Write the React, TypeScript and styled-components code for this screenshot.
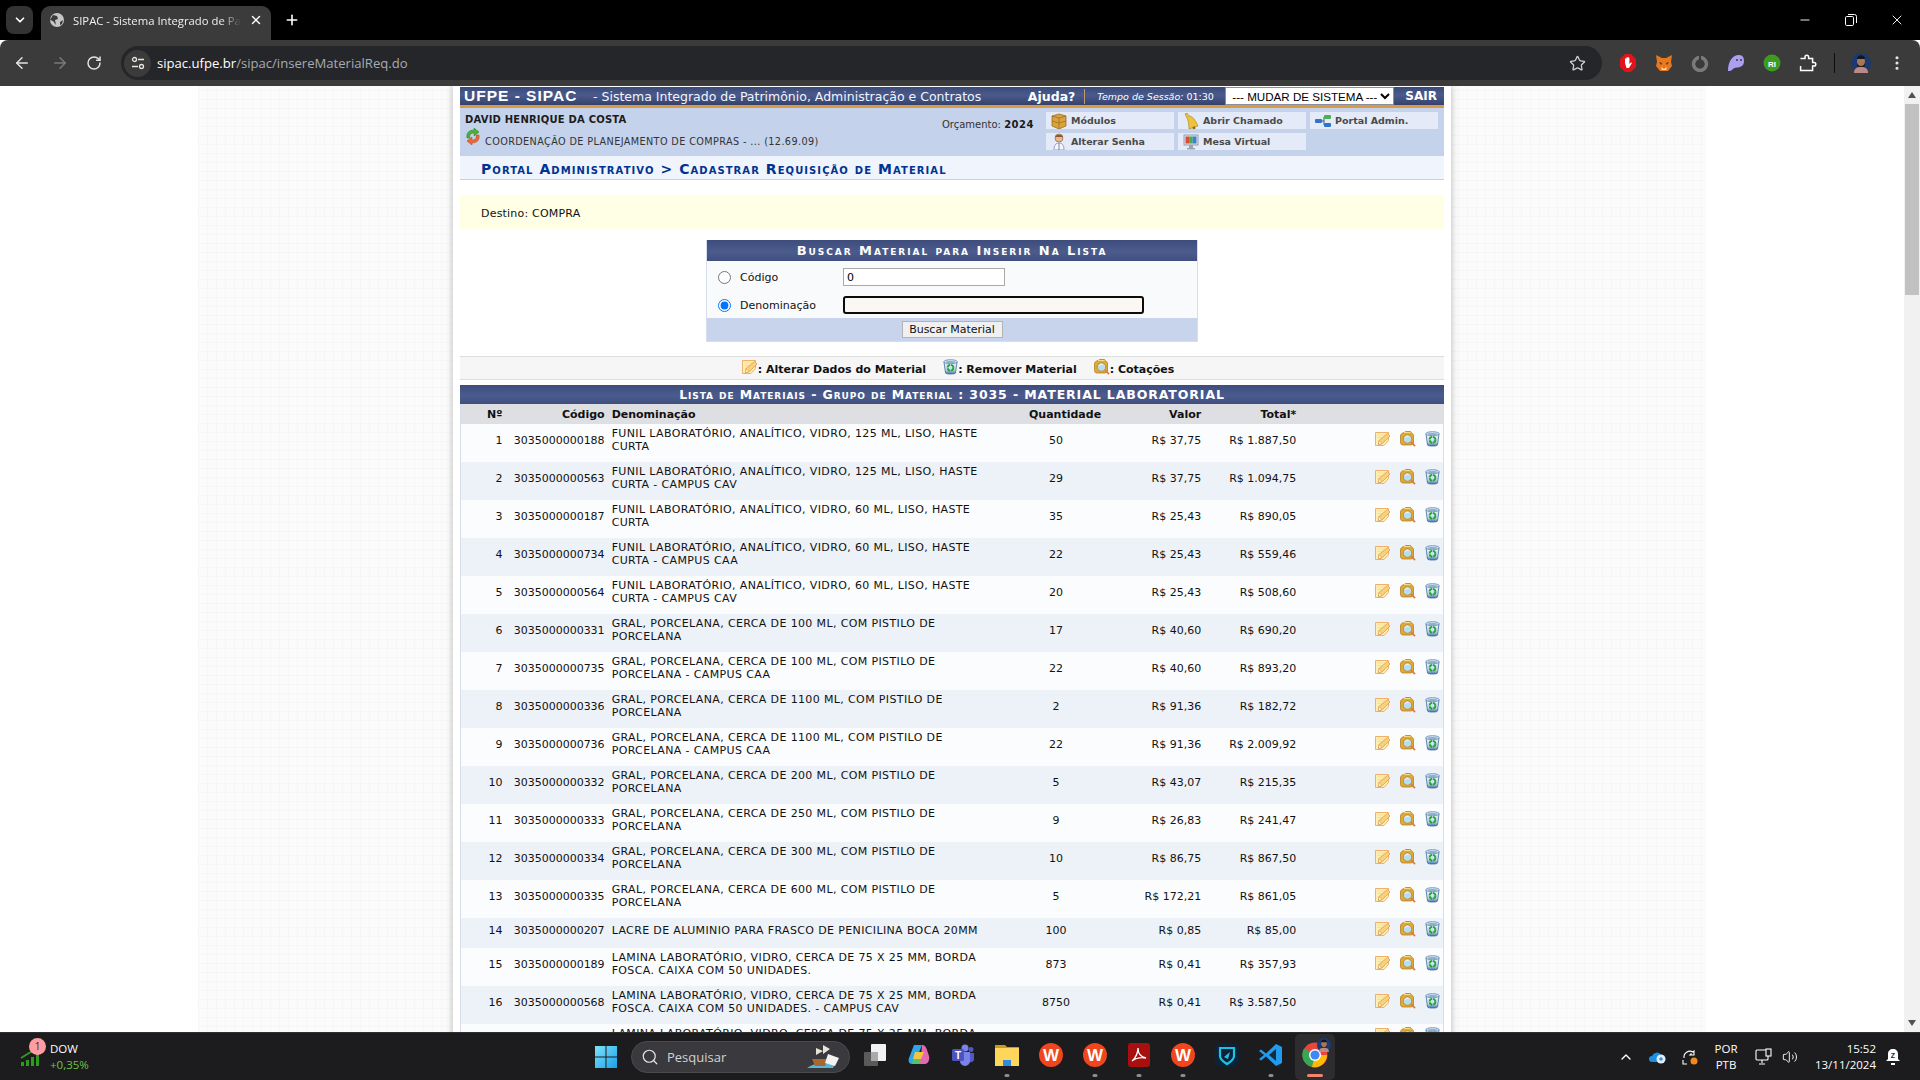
import React from 'react';
import styled, { createGlobalStyle } from 'styled-components';
import {
  ArrowLeft,
  ArrowRight,
  ChevronDown,
  ChevronUp,
  EllipsisVertical,
  Minus,
  Plus,
  RotateCw,
  Search,
  Star,
  Volume2,
  X,
} from 'lucide-react';

const VERDANA = '"DejaVu Sans", Verdana, sans-serif';
const SEGOE = '"Open Sans", "Noto Sans", sans-serif';

const GlobalStyle = createGlobalStyle`
  html, body { margin: 0; padding: 0; height: 100%; overflow: hidden; background: #fff; }
  * { box-sizing: border-box; }
`;

const Screen = styled.div`
  width: 1920px;
  height: 1080px;
  display: flex;
  flex-direction: column;
  overflow: hidden;
`;

/* browser chrome */
const TabStrip = styled.div`
  height: 40px;
  flex: none;
  background: #000;
  display: flex;
  align-items: flex-start;
  padding: 6px 0 0 6px;
  font-family: ${SEGOE};
  color: #fff;
`;

const TabSearch = styled.div`
  width: 27px;
  height: 28px;
  border-radius: 8px;
  background: #333;
  display: flex;
  align-items: center;
  justify-content: center;
`;

const Tab = styled.div`
  width: 230px;
  height: 34px;
  margin-left: 8px;
  border-radius: 9px 9px 0 0;
  background: #3b3b3b;
  display: flex;
  align-items: center;
  padding: 0 8px 6px 8px;
  gap: 8px;
`;

const TabTitle = styled.span`
  flex: 1;
  font-size: 11.3px;
  white-space: nowrap;
  overflow: hidden;
  color: #f0f0f0;
  -webkit-mask-image: linear-gradient(90deg, #000 88%, transparent);
  mask-image: linear-gradient(90deg, #000 88%, transparent);
`;

const NewTab = styled.div`
  margin: 5px 0 0 12px;
  width: 18px;
  height: 18px;
  display: flex;
  align-items: center;
  justify-content: center;
`;

const WindowControls = styled.div`
  margin-left: auto;
  display: flex;
  height: 28px;
  align-items: center;
`;

const WindowButton = styled.div`
  width: 46px;
  display: flex;
  align-items: center;
  justify-content: center;
`;

const Toolbar = styled.div`
  height: 46px;
  flex: none;
  background: #3b3b3b;
  border-radius: 8px 8px 0 0;
  display: flex;
  align-items: flex-start;
  padding-top: 6px;
  font-family: ${SEGOE};
`;

const NavButton = styled.div<{ $w: number }>`
  width: ${(p) => p.$w}px;
  height: 34px;
  flex: none;
  display: flex;
  align-items: center;
  justify-content: center;
`;

const AddressBar = styled.div`
  width: 1481px;
  margin-left: 9px;
  height: 34px;
  flex: none;
  border-radius: 17px;
  background: #25262a;
  display: flex;
  align-items: center;
  padding: 0 16px 0 3px;
`;

const SiteInfo = styled.div`
  width: 27px;
  height: 27px;
  border-radius: 50%;
  background: #3b3b3b;
  display: flex;
  align-items: center;
  justify-content: center;
  flex: none;
`;

const Url = styled.div`
  margin-left: 6px;
  font-size: 13.1px;
  color: #a9abaf;
  white-space: nowrap;
  flex: 1;
  b { font-weight: 400; color: #fff; }
`;

const Extensions = styled.div`
  display: flex;
  align-items: center;
  height: 34px;
  margin-left: 8px;
`;

const ExtensionSlot = styled.div`
  width: 36px;
  display: flex;
  justify-content: center;
  align-items: center;
`;

const ToolbarSeparator = styled.div`
  width: 1px;
  height: 20px;
  background: #0c0c0c;
  margin: 0 8px 0 8px;
`;

/* page */
const Main = styled.div`
  flex: 1;
  min-height: 0;
  display: flex;
`;

const PageArea = styled.div`
  flex: 1;
  min-width: 0;
  overflow: hidden;
  background: #fff;
`;

const Backdrop = styled.div`
  width: 1508px;
  margin: 0 auto;
  min-height: 100%;
  background-color: #fbfbfb;
  background-image:
    repeating-linear-gradient(90deg, #f6f6f6 0 1px, transparent 1px 9px),
    repeating-linear-gradient(0deg, #f6f6f6 0 1px, transparent 1px 9px);
`;

const Paper = styled.div`
  width: 998px;
  margin: 0 auto;
  background: #fff;
  padding: 1px 7px 0;
  box-shadow: 0 0 7px rgba(0, 0, 0, 0.28);
  font-family: ${VERDANA};
  font-size: 11px;
  color: #111;
`;

const TitleBar = styled.div`
  height: 21px;
  background: linear-gradient(#3a4a78, #4a5a8c 45%, #34426c);
  border-bottom: 3px solid #d99a42;
  display: flex;
  align-items: center;
  color: #fff;
`;

const Brand = styled.span`
  font-family: "Liberation Sans", Arial, sans-serif;
  font-weight: 700;
  font-size: 15.5px;
  letter-spacing: 1px;
  margin-left: 4px;
  width: 129px;
  white-space: nowrap;
`;

const Subtitle = styled.span`
  font-size: 12.5px;
  padding-top: 1px;
  white-space: nowrap;
  color: #f2f4fa;
`;

const TitleTools = styled.div`
  margin-left: auto;
  display: flex;
  align-items: center;
  height: 100%;
`;

const HelpLink = styled.span`
  font-weight: 700;
  font-size: 12.5px;
  padding-right: 9px;
  border-right: 1px solid #b99a6a;
  margin-right: 12px;
  line-height: 15px;
`;

const SessionTime = styled.span`
  font-size: 9.5px;
  font-style: italic;
  width: 128px;
  white-space: nowrap;
  b { font-style: normal; font-weight: 400; }
`;

const SystemSelect = styled.select`
  width: 169px;
  height: 18px;
  font-family: "Liberation Sans", Arial, sans-serif;
  font-size: 11.6px;
  background: #fff;
  color: #000;
  border: 1px solid #8a8fa0;
  padding: 0 0 0 2px;
`;

const Logout = styled.span`
  font-weight: 700;
  font-size: 12px;
  margin: 0 7px 0 11px;
`;

const UserBar = styled.div`
  height: 48px;
  background: #c4d2eb;
  display: flex;
  padding: 4px 6px 0 5px;
`;

const UserInfo = styled.div`
  flex: 1;
  display: flex;
  flex-direction: column;
  padding-top: 1px;
  color: #222;
`;

const UserName = styled.div`
  font-weight: 700;
  font-size: 10px;
  letter-spacing: 0.2px;
  line-height: 14px;
  color: #1c1c1c;
`;

const UserUnit = styled.div`
  display: flex;
  align-items: flex-end;
  gap: 4px;
  font-size: 9.7px;
  letter-spacing: 0.38px;
  height: 20px;
  color: #333;
  svg { margin-bottom: 2px; }
`;

const Budget = styled.div`
  font-size: 10px;
  margin: 7px 12px 0 0;
  white-space: nowrap;
  color: #333;
  b { color: #1a1a1a; letter-spacing: 0.5px; }
`;

const MenuGrid = styled.div`
  display: grid;
  grid-template-columns: repeat(3, 128px);
  grid-auto-rows: 17px;
  gap: 4px;
`;

const MenuItem = styled.div`
  background: #e4eaf7;
  display: flex;
  align-items: center;
  gap: 4px;
  padding-left: 5px;
  font-weight: 700;
  font-size: 9.5px;
  color: #4a4a4a;
  white-space: nowrap;
`;

const Breadcrumb = styled.div`
  height: 24px;
  background: #f0f4fc;
  border-bottom: 1px solid #c4d2eb;
  padding: 3px 0 0 21px;
  display: flex;
  align-items: center;
  font-variant: small-caps;
  font-weight: 700;
  font-size: 14px;
  letter-spacing: 1.06px;
  color: #003390;
`;

const Notice = styled.div`
  margin-top: 15px;
  height: 34px;
  background: #ffffe6;
  display: flex;
  align-items: center;
  padding: 2px 0 0 21px;
  letter-spacing: 0.2px;
`;

const SearchForm = styled.div`
  width: 492px;
  margin: 11px auto 0;
  border: 1px solid #d6deee;
  border-top: 0;
  background: #f9fafc;
`;

const Caption = styled.div<{ $h: number; $size: number; $ls: number }>`
  height: ${(p) => p.$h}px;
  background: linear-gradient(#3d4c7c, #4b5b8d 55%, #404f80);
  color: #fff;
  display: flex;
  align-items: center;
  justify-content: center;
  font-variant: small-caps;
  font-weight: 700;
  font-size: ${(p) => p.$size}px;
  letter-spacing: ${(p) => p.$ls}px;
  white-space: nowrap;
`;

const FormRows = styled.div`
  display: grid;
  grid-template-columns: 22px 103px 1fr;
  grid-auto-rows: 28px;
  align-items: center;
  padding: 2px 0 0 11px;
  height: 57px;
`;

const Radio = styled.input`
  width: 13px;
  height: 13px;
  margin: 0;
  accent-color: #0075ff;
`;

const TextInput = styled.input<{ $w: number }>`
  width: ${(p) => p.$w}px;
  height: 18px;
  font-family: ${VERDANA};
  font-size: 11px;
  background: #fff;
  border: 1px solid #a9a9a9;
  padding: 0 3px;
  outline: none;
`;

const FocusedInput = styled(TextInput)`
  border: 2px solid #0c0c0c;
  border-radius: 3px;
  background: #fbf8f4;
`;

const FormFooter = styled.div`
  height: 23px;
  background: #c8d4eb;
  display: flex;
  align-items: center;
  justify-content: center;
`;

const SubmitButton = styled.button`
  width: 101px;
  height: 17px;
  padding: 0;
  font-family: ${VERDANA};
  font-size: 11px;
  color: #111;
  background: #f0f0f0;
  border: 1px solid #b4b4b4;
`;

const Legend = styled.div`
  margin-top: 14px;
  height: 24px;
  background: #f6f6f6;
  border-top: 1px solid #dedede;
  border-bottom: 1px solid #dedede;
  display: flex;
  align-items: center;
  justify-content: center;
  padding: 2px 0 0 12px;
  gap: 17px;
  font-weight: 700;
  font-size: 11px;
`;

const LegendItem = styled.span`
  display: flex;
  align-items: center;
  white-space: nowrap;
  svg { margin-top: -4px; }
`;

const ListSection = styled.div`
  margin-top: 5px;
`;

const MaterialsTable = styled.table`
  width: 984px;
  table-layout: fixed;
  border-collapse: collapse;
  border-left: 1px solid #d8dde8;
  border-right: 1px solid #d8dde8;
  line-height: 13px;
`;

const HeadRow = styled.tr`
  height: 20px;
  background: #dedfe3;
`;

const HeadCell = styled.th<{ $align?: string; $pl?: number }>`
  padding: 0 2px 0 ${(p) => p.$pl ?? 2}px;
  font-weight: 700;
  font-size: 11px;
  text-align: ${(p) => p.$align ?? 'right'};
  white-space: nowrap;
`;

const DataRow = styled.tr<{ $even: boolean }>`
  background: ${(p) => (p.$even ? '#edf1f8' : '#fbfcfe')};
`;

const Cell = styled.td`
  padding: 3px 2px 9px;
  text-align: right;
  vertical-align: middle;
  white-space: nowrap;
`;

const DescriptionCell = styled(Cell)`
  padding-left: 5px;
  padding-right: 36px;
  text-align: left;
  white-space: normal;
  letter-spacing: 0.37px;
`;

const ClippedDescriptionCell = styled(DescriptionCell)`
  vertical-align: top;
`;

const QuantityCell = styled(Cell)`
  text-align: center;
  padding-right: 20px;
`;

const ActionsCell = styled(Cell)`
  padding-right: 3px;
`;

const Actions = styled.div`
  display: flex;
  justify-content: flex-end;
  align-items: flex-start;
  height: 18px;
  gap: 9px;
`;

/* scrollbar */
const ScrollTrack = styled.div`
  width: 16px;
  flex: none;
  background: #f1f1f1;
  display: flex;
  flex-direction: column;
  align-items: center;
  justify-content: space-between;
  position: relative;
  padding: 6px 0;
`;

const ScrollThumb = styled.div`
  position: absolute;
  top: 18px;
  left: 1px;
  width: 14px;
  height: 191px;
  background: #c1c1c1;
`;

const ScrollArrow = styled.div<{ $down?: boolean }>`
  width: 0;
  height: 0;
  border-left: 4px solid transparent;
  border-right: 4px solid transparent;
  ${(p) => (p.$down ? 'border-top: 6px solid #505050;' : 'border-bottom: 6px solid #505050;')}
`;

/* taskbar */
const Taskbar = styled.div`
  height: 48px;
  flex: none;
  background: #1c1c1e;
  border-top: 1px solid #2e2e30;
  display: flex;
  align-items: center;
  font-family: ${SEGOE};
  color: #fff;
`;

const Widget = styled.div`
  width: 588px;
  flex: none;
  height: 100%;
  display: flex;
  align-items: center;
  padding-left: 20px;
  gap: 6px;
  position: relative;
`;

const WidgetBadge = styled.span`
  position: absolute;
  left: 29px;
  top: 5px;
  width: 17px;
  height: 17px;
  border-radius: 50%;
  background: #ff9da3;
  color: #5a1a20;
  font-size: 10px;
  line-height: 17px;
  text-align: center;
`;

const WidgetText = styled.div`
  display: flex;
  flex-direction: column;
  font-size: 11.5px;
  line-height: 16px;
  margin-top: 1px;
  span + span { color: #6cc24a; }
`;

const StartButton = styled.div`
  width: 36px;
  display: flex;
  justify-content: center;
`;

const SearchBox = styled.div`
  width: 219px;
  height: 32px;
  margin-left: 7px;
  border-radius: 16px;
  background: #3a3a3e;
  border: 1px solid #4a4a4e;
  display: flex;
  align-items: center;
  padding: 0 7px 0 9px;
  font-size: 13px;
  color: #d2d2d2;
  gap: 8px;
`;

const SearchLabel = styled.span`
  flex: 1;
`;

const TaskIcons = styled.div`
  display: flex;
  margin-left: 3px;
`;

const TaskIcon = styled.div<{ $active?: boolean }>`
  width: 44px;
  height: 46px;
  display: flex;
  align-items: center;
  justify-content: center;
  position: relative;
  padding-bottom: 4px;
  ${(p) => (p.$active ? 'background: #2d2d30; border-radius: 5px; margin: 0 2px; width: 40px;' : '')}
`;

const RunDot = styled.span<{ $active?: boolean }>`
  position: absolute;
  bottom: 3px;
  left: 50%;
  transform: translateX(-50%);
  width: ${(p) => (p.$active ? 16 : 5)}px;
  height: 3px;
  border-radius: 2px;
  background: ${(p) => (p.$active ? '#f4836b' : '#8d8d8d')};
`;

const ProfileOverlay = styled.span`
  position: absolute;
  top: 4px;
  right: 4px;
  display: flex;
`;

const Tray = styled.div`
  margin-left: auto;
  display: flex;
  align-items: center;
  height: 100%;
  padding-right: 10px;
`;

const TraySlot = styled.div<{ $w: number }>`
  width: ${(p) => p.$w}px;
  display: flex;
  align-items: center;
  justify-content: center;
`;

const Language = styled.div`
  width: 40px;
  font-size: 11.5px;
  line-height: 16px;
  text-align: center;
`;

const Clock = styled.div`
  width: 78px;
  font-size: 11.5px;
  line-height: 16px;
  text-align: right;
`;

/* drawn icons */
const NoteIcon = () => (
  <svg width="16" height="16" viewBox="0 0 16 16">
    <path d="M.5 1.500h13v8l-4.500 5H.5z" fill="#fdeeb4" stroke="#efb06a" />
    <path d="M2.500 4h8M2.500 6.500h5" stroke="#f6d88e" strokeWidth=".8" />
    <path d="M4 9.500l8.500-7 2.500 2.500-7.500 7.500-4 1.500z" fill="#f8d27a" stroke="#e39b4c" strokeWidth=".8" />
    <path d="M4 9.500l-.8 4.500 3.800-1.400z" fill="#fff0c4" stroke="#d98c44" strokeWidth=".5" />
  </svg>
);

const QuoteIcon = () => (
  <svg width="16" height="16" viewBox="0 0 16 16">
    <path d="M4 1.500L6 .5h4.500l1 1.500c1.500.5 2 1.500 2 3v7.500L11 14H3c-1.500 0-2.500-1-2.500-2.500V5c0-2 1.500-3 3.500-3.500z" fill="#e5a92e" stroke="#a9761c" strokeWidth=".7" />
    <path d="M4 1.500h6.500" stroke="#f7d986" strokeWidth="1" />
    <circle cx="7.500" cy="8" r="4.300" fill="#b6deee" stroke="#b98f3c" strokeWidth="1" />
    <path d="M5.500 6.500c.7-1 2-1.300 3-1" stroke="#fff" strokeWidth="1" fill="none" />
    <path d="M11 11.200l4 4" stroke="#d97a48" strokeWidth="1.700" />
  </svg>
);

const BinIcon = () => (
  <svg width="15" height="16" viewBox="0 0 15 16">
    <defs>
      <linearGradient id="binBody" x1="0" y1="0" x2="0" y2="1">
        <stop offset="0" stopColor="#e6f0f8" />
        <stop offset=".65" stopColor="#c4dcef" />
        <stop offset="1" stopColor="#3f6ea8" />
      </linearGradient>
    </defs>
    <path d="M1 3l1.500 11c.3 1.400 9.700 1.400 10 0L14 3z" fill="url(#binBody)" stroke="#41699c" strokeWidth=".8" />
    <ellipse cx="7.500" cy="2.700" rx="6.700" ry="2" fill="#d6e6f2" stroke="#5f86b2" strokeWidth=".8" />
    <ellipse cx="7.500" cy="3" rx="4.800" ry="1" fill="#8eaecb" />
    <circle cx="7.500" cy="8.800" r="2.900" fill="none" stroke="#29a23c" strokeWidth="1.900" strokeDasharray="3.800 .8" />
  </svg>
);

const SwapIcon = () => (
  <svg width="16" height="17" viewBox="0 0 16 17">
    <path d="M2 10C1 5 4 2 9 2V0l5 4-5 4V5C6 5 4 7 5 10z" fill="#4cae3c" stroke="#2e7d22" strokeWidth=".5" />
    <path d="M14 7c1 5-2 8-7 8v2l-5-4 5-4v3c3 0 5-2 4-5z" fill="#e8683c" stroke="#b8431c" strokeWidth=".5" />
  </svg>
);

const BoxIcon = () => (
  <svg width="16" height="16" viewBox="0 0 16 16">
    <path d="M8 1l7 2v10l-7 3-7-3V3z" fill="#d9a23c" stroke="#8f6418" strokeWidth=".7" />
    <path d="M8 5v11M1 3l7 2 7-2M1 8l7 2 7-2" fill="none" stroke="#8f6418" strokeWidth=".6" />
  </svg>
);

const BellIcon = () => (
  <svg width="16" height="16" viewBox="0 0 16 16">
    <path d="M2 1l2-1 2 3c3 0 6 3 9 10L6 16C6 11 5 7 4 5z" fill="#eec23a" stroke="#a87f14" strokeWidth=".6" />
    <circle cx="11" cy="15" r="1.400" fill="#8a6a14" />
  </svg>
);

const AdminIcon = () => (
  <svg width="16" height="14" viewBox="0 0 16 14">
    <path d="M6 7h3M9 3v8" stroke="#3a5a8a" strokeWidth="1" />
    <rect x="0" y="5" width="7" height="4" fill="#2f74c8" rx="1" />
    <rect x="9" y="1" width="7" height="4" fill="#4cb050" rx="1" />
    <rect x="9" y="9" width="7" height="4" fill="#2f74c8" rx="1" />
  </svg>
);

const UserIcon = () => (
  <svg width="16" height="17" viewBox="0 0 16 17">
    <circle cx="8" cy="5" r="4" fill="#e9b98e" stroke="#7a5636" strokeWidth=".6" />
    <path d="M4 4c1-3 7-3 8 0z" fill="#8a5a2c" />
    <path d="M3 17c0-5 2-7 5-7s5 2 5 7z" fill="#f4f6fb" stroke="#5f6f9f" strokeWidth=".6" />
    <path d="M8 10v7" stroke="#5f6f9f" strokeWidth=".8" />
  </svg>
);

const MonitorIcon = () => (
  <svg width="16" height="16" viewBox="0 0 16 16">
    <rect x="1" y="1" width="14" height="10" fill="#dfe3ea" stroke="#767f8e" strokeWidth=".7" />
    <rect x="2.500" y="2.500" width="3.600" height="7" fill="#e04a3a" />
    <rect x="6.100" y="2.500" width="3.600" height="7" fill="#45b04a" />
    <rect x="9.700" y="2.500" width="3.800" height="7" fill="#3d7fd8" />
    <path d="M6 11h4v3h2v1.500H4V14h2z" fill="#9ca3ae" />
  </svg>
);

const Globe = () => (
  <svg width="16" height="16" viewBox="0 0 16 16">
    <circle cx="8" cy="8" r="7" fill="#c4c7c5" />
    <path d="M4 3l4 1 1 3-3 1 1 5-3-4-3-1zM11 10l3-2-1 4-2 1z" fill="#3b3b3b" />
  </svg>
);

const RestoreIcon = () => (
  <svg width="12" height="12" viewBox="0 0 12 12" fill="none" stroke="#fff">
    <rect x=".5" y="2.500" width="8" height="9" rx="1.200" />
    <path d="M3 .5h6.500a2 2 0 0 1 2 2V9" />
  </svg>
);

const TuneIcon = () => (
  <svg width="14" height="14" viewBox="0 0 14 14" fill="none" stroke="#e6e6e6" strokeWidth="1.300">
    <circle cx="3.500" cy="3.500" r="2" />
    <path d="M7 3.500h6M1 10.500h6" />
    <circle cx="10.500" cy="10.500" r="2" />
  </svg>
);

const StopExt = () => (
  <svg width="16" height="18" viewBox="0 0 16 18">
    <path d="M5 0h6l5 5v8l-5 5H5l-5-5V5z" fill="#e0141c" />
    <path d="M5 9V5c0-1 1.400-1 1.400 0V3.700c0-1 1.500-1 1.500 0V4c0-1 1.500-1 1.500 0v6l1-1c1-1 2 0 1 1l-2.500 4H6.500z" fill="#fff" />
  </svg>
);

const FoxExt = () => (
  <svg width="18" height="18" viewBox="0 0 18 18">
    <path d="M1 1l6 3h4l6-3-1 7 1 4-4 5H5l-4-5 1-4z" fill="#e8781e" />
    <path d="M6 13l3 2 3-2-1 3H7z" fill="#f4e2d0" />
    <path d="M4 8l3 1-1 2zM14 8l-3 1 1 2z" fill="#5a3212" />
  </svg>
);

const RingExt = () => (
  <svg width="18" height="18" viewBox="0 0 18 18" fill="none">
    <circle cx="9" cy="10" r="6.500" stroke="#7a7a7a" strokeWidth="3.500" />
    <path d="M9 1v6" stroke="#3b3b3b" strokeWidth="2" />
  </svg>
);

const GhostExt = () => (
  <svg width="18" height="18" viewBox="0 0 18 18">
    <path d="M1 17C1 8 5 1 12 1c4 0 5 3 5 6s-1 5-4 6-5 0-7 2-3 2-5 2z" fill="#ab9ff2" />
    <circle cx="10" cy="6" r="1" fill="#3b3b3b" />
    <circle cx="14" cy="6" r="1" fill="#3b3b3b" />
  </svg>
);

const GreenExt = () => (
  <svg width="18" height="18" viewBox="0 0 18 18">
    <circle cx="9" cy="9" r="8.500" fill="#3f9a22" />
    <text x="9" y="12.500" textAnchor="middle" fontSize="8" fontWeight="700" fill="#fff" fontFamily="Liberation Sans">RI</text>
  </svg>
);

const PuzzleExt = () => (
  <svg width="18" height="18" viewBox="0 0 18 18" fill="none" stroke="#fff" strokeWidth="1.500">
    <path d="M1.500 4.500H6V3a1.800 1.800 0 0 1 3.600 0v1.500h4v4H15a1.800 1.800 0 0 1 0 3.600h-1.400v4.400h-12v-4.500" />
  </svg>
);

const Avatar = ({ size }: { size: number }) => (
  <svg width={size} height={size} viewBox="0 0 20 20">
    <circle cx="10" cy="10" r="10" fill="#1d3a6e" />
    <ellipse cx="10" cy="8.500" rx="4" ry="5" fill="#a8775a" />
    <path d="M6 6c0-5 8-5 8 0z" fill="#15151c" />
    <path d="M6 10c1 4 7 4 8 0v3c-1 2-7 2-8 0z" fill="#25201e" />
    <path d="M3 20c0-5 3-6 7-6s7 1 7 6z" fill="#b98a88" />
  </svg>
);

const BarsIcon = () => (
  <svg width="24" height="20" viewBox="0 0 24 20">
    <path d="M1 15h3v4H1zM6 13h3v6H6zM11 10h3v9h-3zM16 7h3v12h-3z" fill="#2e9a1e" />
    <path d="M1 11L14 3" stroke="#2e9a1e" strokeWidth="2" />
  </svg>
);

const WinLogo = () => (
  <svg width="24" height="24" viewBox="0 0 24 24">
    <defs>
      <linearGradient id="win" x1="0" y1="0" x2="1" y2="1">
        <stop offset="0" stopColor="#7fe3fa" />
        <stop offset="1" stopColor="#1aa0e8" />
      </linearGradient>
    </defs>
    <path d="M1 1h10.500v10.500H1zM12.500 1H23v10.500H12.500zM1 12.500h10.500V23H1zM12.500 12.500H23V23H12.500z" fill="url(#win)" />
  </svg>
);

const ShipArt = () => (
  <svg width="38" height="26" viewBox="0 0 38 26">
    <path d="M3 24c6-4 12-6 20-5l10-3-4 8z" fill="#58b6d8" />
    <path d="M8 15h16l-3 7H11z" fill="#a9672f" />
    <path d="M12 4l7 3-7 4zM19 1l7 4-7 5z" fill="#e8e4d8" />
    <path d="M24 10l11 4-4 8-10-3z" fill="#f2f2ee" />
  </svg>
);

const FilesIcon = () => (
  <svg width="24" height="24" viewBox="0 0 24 24">
    <rect x="1" y="9" width="14" height="14" rx="1" fill="#5a5a5a" />
    <rect x="8" y="1" width="15" height="17" rx="1" fill="#f2f2f2" />
    <rect x="8" y="9" width="7" height="9" fill="#aaa" />
  </svg>
);

const CopilotIcon = () => (
  <svg width="24" height="24" viewBox="0 0 24 24">
    <path d="M7 2h8l-4 10-3 9H5C2 21 1 18 2 15z" fill="#2ea7e8" />
    <path d="M15 2c3 0 4 2 5 5l2 6c1 4-1 8-4 8h-7l3-8z" fill="#e46ab0" />
    <path d="M8 9h9l-3 7H6z" fill="#f5c342" />
    <path d="M6 16h8l-2 5H5z" fill="#4cc56c" />
  </svg>
);

const TeamsIcon = () => (
  <svg width="24" height="24" viewBox="0 0 24 24">
    <circle cx="14" cy="5" r="3.500" fill="#7b83eb" />
    <circle cx="20" cy="6.500" r="2.500" fill="#5059c9" />
    <path d="M17 10h6v7a3.500 3.500 0 0 1-6 1z" fill="#5059c9" />
    <path d="M7 9h12v9a5 5 0 0 1-10 0z" fill="#7b83eb" />
    <rect x="1" y="6" width="12" height="12" rx="1.500" fill="#4b53bc" />
    <text x="7" y="15.500" textAnchor="middle" fontSize="10" fontWeight="700" fill="#fff" fontFamily="Liberation Sans">T</text>
  </svg>
);

const FolderIcon = () => (
  <svg width="24" height="24" viewBox="0 0 24 24">
    <path d="M0 2h10l2 2h12v4H0z" fill="#c99a1c" />
    <rect x="0" y="5" width="24" height="18" fill="#ffd65c" />
    <rect x="8" y="17" width="8" height="6" fill="#2f8ae0" />
  </svg>
);

const WpsIcon = () => (
  <svg width="24" height="24" viewBox="0 0 24 24">
    <circle cx="12" cy="12" r="12" fill="#f0451e" />
    <text x="12" y="18" textAnchor="middle" fontSize="17" fontWeight="700" fill="#fff" fontFamily="Liberation Sans">W</text>
  </svg>
);

const PdfIcon = () => (
  <svg width="22" height="24" viewBox="0 0 22 24">
    <rect width="22" height="24" rx="3" fill="#a80f0f" />
    <path d="M4 18c4-3 6-9 6-13 0 5 2 9 8 10-5-1-10 0-14 3z" fill="none" stroke="#fff" strokeWidth="1.300" />
  </svg>
);

const ShieldIcon = () => (
  <svg width="24" height="24" viewBox="0 0 24 24">
    <rect width="24" height="24" rx="5" fill="#0e2236" />
    <path d="M5 5h14v8c0 4-4 6-7 8-3-2-7-4-7-8z" fill="none" stroke="#1cc3e6" strokeWidth="2.200" />
    <path d="M9 14l6-5-2 7z" fill="#1cc3e6" />
  </svg>
);

const VsCodeIcon = () => (
  <svg width="24" height="24" viewBox="0 0 24 24">
    <path d="M17 1l6 3v16l-6 3L7 13.500 2 17.500 0 16l5-4-5-4 2-1.500 5 4z" fill="#1f9cf0" />
    <path d="M17 6v12l-7-6z" fill="#1c2a38" />
  </svg>
);

const ChromeIcon = () => (
  <svg width="26" height="26" viewBox="0 0 26 26">
    <circle cx="13" cy="13" r="12.500" fill="#e8453c" />
    <path d="M13 13L2 6.500A12.500 12.500 0 0 0 10 25z" fill="#35a853" />
    <path d="M13 13l12 0A12.500 12.500 0 0 1 10 25z" fill="#fbbc04" />
    <circle cx="13" cy="13" r="6" fill="#fff" />
    <circle cx="13" cy="13" r="4.600" fill="#4285f4" />
  </svg>
);

const OneDriveIcon = () => (
  <svg width="18" height="16" viewBox="0 0 18 16">
    <path d="M3 13a3 3 0 0 1 0-6 5 5 0 0 1 9-1 4 4 0 0 1 3 7z" fill="#1d8fe0" />
    <circle cx="12" cy="10" r="4.500" fill="#dfeefa" />
    <path d="M10 10h4M12 8v4" stroke="#1d6fb8" strokeWidth="1" />
  </svg>
);

const SyncIcon = () => (
  <svg width="18" height="18" viewBox="0 0 18 18" fill="none" stroke="#fff" strokeWidth="1.100">
    <path d="M3 10a6 6 0 0 1 9-6l1-1v4H9l1.500-1.500" />
    <path d="M2 12v4h4" />
    <circle cx="13" cy="13" r="3.500" fill="#f08a1c" stroke="none" />
  </svg>
);

const NetworkIcon = () => (
  <svg width="18" height="18" viewBox="0 0 18 18" fill="none" stroke="#fff" strokeWidth="1.100">
    <rect x="1" y="2" width="12" height="10" rx="1" />
    <path d="M7 12v3M4 16h6" />
    <rect x="11" y="1" width="5" height="7" fill="#1c1c1e" />
  </svg>
);

const BellTray = () => (
  <svg width="14" height="18" viewBox="0 0 14 18">
    <path d="M7 1c3 0 5 2 5 5v5l2 2H0l2-2V6c0-3 2-5 5-5z" fill="#fff" />
    <rect x="5" y="15" width="4" height="2" fill="#fff" />
    <text x="7" y="10" textAnchor="middle" fontSize="7" fontWeight="700" fill="#1c1c1e" fontFamily="Liberation Sans">Z</text>
  </svg>
);

type Material = {
  code: string;
  name: string;
  qty: string;
  unit: string;
  total: string;
};

const funil = 'FUNIL LABORATÓRIO, ANALÍTICO, VIDRO,';
const gral = 'GRAL, PORCELANA, CERCA DE';
const laminaHead = 'LAMINA LABORATÓRIO, VIDRO, CERCA DE 75 X 25 MM, BORDA';
const lamina = `${laminaHead} FOSCA. CAIXA COM 50 UNIDADES.`;

const materials: Material[] = [
  { code: '3035000000188', name: `${funil} 125 ML, LISO, HASTE CURTA`, qty: '50', unit: '37,75', total: '1.887,50' },
  { code: '3035000000563', name: `${funil} 125 ML, LISO, HASTE CURTA - CAMPUS CAV`, qty: '29', unit: '37,75', total: '1.094,75' },
  { code: '3035000000187', name: `${funil} 60 ML, LISO, HASTE CURTA`, qty: '35', unit: '25,43', total: '890,05' },
  { code: '3035000000734', name: `${funil} 60 ML, LISO, HASTE CURTA - CAMPUS CAA`, qty: '22', unit: '25,43', total: '559,46' },
  { code: '3035000000564', name: `${funil} 60 ML, LISO, HASTE CURTA - CAMPUS CAV`, qty: '20', unit: '25,43', total: '508,60' },
  { code: '3035000000331', name: `${gral} 100 ML, COM PISTILO DE PORCELANA`, qty: '17', unit: '40,60', total: '690,20' },
  { code: '3035000000735', name: `${gral} 100 ML, COM PISTILO DE PORCELANA - CAMPUS CAA`, qty: '22', unit: '40,60', total: '893,20' },
  { code: '3035000000336', name: `${gral} 1100 ML, COM PISTILO DE PORCELANA`, qty: '2', unit: '91,36', total: '182,72' },
  { code: '3035000000736', name: `${gral} 1100 ML, COM PISTILO DE PORCELANA - CAMPUS CAA`, qty: '22', unit: '91,36', total: '2.009,92' },
  { code: '3035000000332', name: `${gral} 200 ML, COM PISTILO DE PORCELANA`, qty: '5', unit: '43,07', total: '215,35' },
  { code: '3035000000333', name: `${gral} 250 ML, COM PISTILO DE PORCELANA`, qty: '9', unit: '26,83', total: '241,47' },
  { code: '3035000000334', name: `${gral} 300 ML, COM PISTILO DE PORCELANA`, qty: '10', unit: '86,75', total: '867,50' },
  { code: '3035000000335', name: `${gral} 600 ML, COM PISTILO DE PORCELANA`, qty: '5', unit: '172,21', total: '861,05' },
  { code: '3035000000207', name: 'LACRE DE ALUMINIO PARA FRASCO DE PENICILINA BOCA 20MM', qty: '100', unit: '0,85', total: '85,00' },
  { code: '3035000000189', name: lamina, qty: '873', unit: '0,41', total: '357,93' },
  { code: '3035000000568', name: `${lamina} - CAMPUS CAV`, qty: '8750', unit: '0,41', total: '3.587,50' },
];

const columns = [44, 102, 413, 90, 93, 95, 145];

const TableCol = styled.col<{ $w: number }>`
  width: ${(p) => p.$w}px;
`;

const ActionIcons = () => (
  <Actions>
    <NoteIcon />
    <QuoteIcon />
    <BinIcon />
  </Actions>
);

const BrowserChrome = () => (
  <>
    <TabStrip>
      <TabSearch>
        <ChevronDown size={14} color="#fff" strokeWidth={3} />
      </TabSearch>
      <Tab>
        <Globe />
        <TabTitle>SIPAC - Sistema Integrado de Pa</TabTitle>
        <X size={14} color="#fff" strokeWidth={2.4} />
      </Tab>
      <NewTab>
        <Plus size={16} color="#fff" strokeWidth={2.4} />
      </NewTab>
      <WindowControls>
        <WindowButton><Minus size={14} color="#fff" strokeWidth={1.6} /></WindowButton>
        <WindowButton><RestoreIcon /></WindowButton>
        <WindowButton><X size={16} color="#fff" strokeWidth={1.4} /></WindowButton>
      </WindowControls>
    </TabStrip>
    <Toolbar>
      <NavButton $w={44}><ArrowLeft size={18} color="#e3e3e3" strokeWidth={2} /></NavButton>
      <NavButton $w={31}><ArrowRight size={18} color="#7a7a7a" strokeWidth={2} /></NavButton>
      <NavButton $w={37}><RotateCw size={16} color="#e3e3e3" strokeWidth={2.2} /></NavButton>
      <AddressBar>
        <SiteInfo><TuneIcon /></SiteInfo>
        <Url><b>sipac.ufpe.br</b>/sipac/insereMaterialReq.do</Url>
        <Star size={17} color="#d0d0d0" strokeWidth={1.8} />
      </AddressBar>
      <Extensions>
        <ExtensionSlot><StopExt /></ExtensionSlot>
        <ExtensionSlot><FoxExt /></ExtensionSlot>
        <ExtensionSlot><RingExt /></ExtensionSlot>
        <ExtensionSlot><GhostExt /></ExtensionSlot>
        <ExtensionSlot><GreenExt /></ExtensionSlot>
        <ExtensionSlot><PuzzleExt /></ExtensionSlot>
        <ToolbarSeparator />
        <ExtensionSlot><Avatar size={20} /></ExtensionSlot>
        <ExtensionSlot><EllipsisVertical size={18} color="#e3e3e3" strokeWidth={2.2} /></ExtensionSlot>
      </Extensions>
    </Toolbar>
  </>
);

const SystemHeader = () => (
  <>
    <TitleBar>
      <Brand>UFPE - SIPAC</Brand>
      <Subtitle>- Sistema Integrado de Patrimônio, Administração e Contratos</Subtitle>
      <TitleTools>
        <HelpLink>Ajuda?</HelpLink>
        <SessionTime>Tempo de Sessão: <b>01:30</b></SessionTime>
        <SystemSelect defaultValue="none">
          <option value="none">--- MUDAR DE SISTEMA ---</option>
        </SystemSelect>
        <Logout>SAIR</Logout>
      </TitleTools>
    </TitleBar>
    <UserBar>
      <UserInfo>
        <UserName>DAVID HENRIQUE DA COSTA</UserName>
        <UserUnit>
          <SwapIcon />
          COORDENAÇÃO DE PLANEJAMENTO DE COMPRAS - ... (12.69.09)
        </UserUnit>
      </UserInfo>
      <Budget>Orçamento: <b>2024</b></Budget>
      <MenuGrid>
        <MenuItem><BoxIcon />Módulos</MenuItem>
        <MenuItem><BellIcon />Abrir Chamado</MenuItem>
        <MenuItem><AdminIcon />Portal Admin.</MenuItem>
        <MenuItem><UserIcon />Alterar Senha</MenuItem>
        <MenuItem><MonitorIcon />Mesa Virtual</MenuItem>
      </MenuGrid>
    </UserBar>
    <Breadcrumb>Portal Administrativo &gt; Cadastrar Requisição de Material</Breadcrumb>
  </>
);

const MaterialSearch = () => (
  <SearchForm>
    <Caption $h={21} $size={13} $ls={1.95}>Buscar Material para Inserir Na Lista</Caption>
    <FormRows>
      <Radio type="radio" name="busca" />
      <span>Código</span>
      <TextInput $w={162} defaultValue="0" />
      <Radio type="radio" name="busca" defaultChecked />
      <span>Denominação</span>
      <FocusedInput $w={301} />
    </FormRows>
    <FormFooter>
      <SubmitButton type="button">Buscar Material</SubmitButton>
    </FormFooter>
  </SearchForm>
);

const MaterialList = () => (
  <ListSection>
    <Caption $h={19} $size={12.5} $ls={0.9}>Lista de Materiais - Grupo de Material : 3035 - MATERIAL LABORATORIAL</Caption>
    <MaterialsTable>
      <colgroup>
        {columns.map((w, i) => (
          <TableCol key={i} $w={w} />
        ))}
      </colgroup>
      <thead>
        <HeadRow>
          <HeadCell>Nº</HeadCell>
          <HeadCell>Código</HeadCell>
          <HeadCell $align="left" $pl={5}>Denominação</HeadCell>
          <HeadCell $align="center">Quantidade</HeadCell>
          <HeadCell>Valor</HeadCell>
          <HeadCell>Total*</HeadCell>
          <HeadCell />
        </HeadRow>
      </thead>
      <tbody>
        {materials.map((m, i) => (
          <DataRow key={m.code} $even={i % 2 === 1}>
            <Cell>{i + 1}</Cell>
            <Cell>{m.code}</Cell>
            <DescriptionCell>{m.name}</DescriptionCell>
            <QuantityCell>{m.qty}</QuantityCell>
            <Cell>R$ {m.unit}</Cell>
            <Cell>R$ {m.total}</Cell>
            <ActionsCell><ActionIcons /></ActionsCell>
          </DataRow>
        ))}
        <DataRow $even={false}>
          <Cell />
          <Cell />
          <ClippedDescriptionCell>{laminaHead}</ClippedDescriptionCell>
          <QuantityCell />
          <Cell />
          <Cell />
          <ActionsCell><ActionIcons /></ActionsCell>
        </DataRow>
      </tbody>
    </MaterialsTable>
  </ListSection>
);

const WindowsTaskbar = () => (
  <Taskbar>
    <Widget>
      <BarsIcon />
      <WidgetBadge>1</WidgetBadge>
      <WidgetText>
        <span>DOW</span>
        <span>+0,35%</span>
      </WidgetText>
    </Widget>
    <StartButton><WinLogo /></StartButton>
    <SearchBox>
      <Search size={18} color="#e6e6e6" strokeWidth={1.6} />
      <SearchLabel>Pesquisar</SearchLabel>
      <ShipArt />
    </SearchBox>
    <TaskIcons>
      <TaskIcon><FilesIcon /></TaskIcon>
      <TaskIcon><CopilotIcon /></TaskIcon>
      <TaskIcon><TeamsIcon /></TaskIcon>
      <TaskIcon><FolderIcon /><RunDot /></TaskIcon>
      <TaskIcon><WpsIcon /></TaskIcon>
      <TaskIcon><WpsIcon /><RunDot /></TaskIcon>
      <TaskIcon><PdfIcon /><RunDot /></TaskIcon>
      <TaskIcon><WpsIcon /><RunDot /></TaskIcon>
      <TaskIcon><ShieldIcon /></TaskIcon>
      <TaskIcon><VsCodeIcon /><RunDot /></TaskIcon>
      <TaskIcon $active>
        <ChromeIcon />
        <ProfileOverlay><Avatar size={14} /></ProfileOverlay>
        <RunDot $active />
      </TaskIcon>
    </TaskIcons>
    <Tray>
      <TraySlot $w={32}><ChevronUp size={16} color="#fff" strokeWidth={2} /></TraySlot>
      <TraySlot $w={32}><OneDriveIcon /></TraySlot>
      <TraySlot $w={32}><SyncIcon /></TraySlot>
      <Language>POR<br />PTB</Language>
      <TraySlot $w={36}><NetworkIcon /></TraySlot>
      <TraySlot $w={16}><Volume2 size={16} color="#fff" strokeWidth={1.4} /></TraySlot>
      <Clock>15:52<br />13/11/2024</Clock>
      <TraySlot $w={34}><BellTray /></TraySlot>
    </Tray>
  </Taskbar>
);

export default function App() {
  return (
    <>
      <GlobalStyle />
      <Screen>
        <BrowserChrome />
        <Main>
          <PageArea>
            <Backdrop>
              <Paper>
                <SystemHeader />
                <Notice>Destino: COMPRA</Notice>
                <MaterialSearch />
                <Legend>
                  <LegendItem><NoteIcon />: Alterar Dados do Material</LegendItem>
                  <LegendItem><BinIcon />: Remover Material</LegendItem>
                  <LegendItem><QuoteIcon />: Cotações</LegendItem>
                </Legend>
                <MaterialList />
              </Paper>
            </Backdrop>
          </PageArea>
          <ScrollTrack>
            <ScrollArrow />
            <ScrollThumb />
            <ScrollArrow $down />
          </ScrollTrack>
        </Main>
        <WindowsTaskbar />
      </Screen>
    </>
  );
}
